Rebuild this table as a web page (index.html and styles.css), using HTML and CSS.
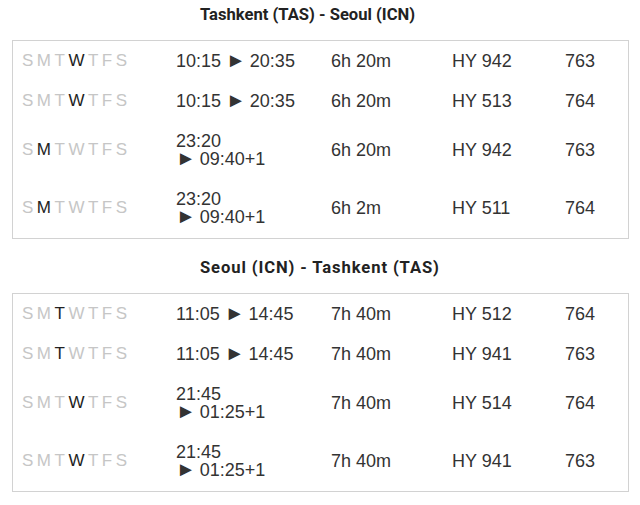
FILE: index.html
```html
<!DOCTYPE html>
<html lang="en">
<head>
<meta charset="utf-8">
<title>Tashkent - Seoul schedule</title>
<link rel="stylesheet" href="styles.css">
</head>
<body>
<main class="page">
  <section class="route">
    <h2 class="route-title">Tashkent (TAS) - Seoul (ICN)</h2>
    <div class="schedule">
      <div class="flight">
        <div class="days"><span>S</span><span>M</span><span>T</span><span class="on">W</span><span>T</span><span>F</span><span>S</span></div>
        <div class="time">10:15 <span class="arrow">►</span>&nbsp;20:35</div>
        <div class="dur">6h 20m</div>
        <div class="code">HY 942</div>
        <div class="craft">763</div>
      </div>
      <div class="flight">
        <div class="days"><span>S</span><span>M</span><span>T</span><span class="on">W</span><span>T</span><span>F</span><span>S</span></div>
        <div class="time">10:15 <span class="arrow">►</span>&nbsp;20:35</div>
        <div class="dur">6h 20m</div>
        <div class="code">HY 513</div>
        <div class="craft">764</div>
      </div>
      <div class="flight">
        <div class="days"><span>S</span><span class="on">M</span><span>T</span><span>W</span><span>T</span><span>F</span><span>S</span></div>
        <div class="time">23:20 <span class="arrow">►</span>&nbsp;09:40+1</div>
        <div class="dur">6h 20m</div>
        <div class="code">HY 942</div>
        <div class="craft">763</div>
      </div>
      <div class="flight">
        <div class="days"><span>S</span><span class="on">M</span><span>T</span><span>W</span><span>T</span><span>F</span><span>S</span></div>
        <div class="time">23:20 <span class="arrow">►</span>&nbsp;09:40+1</div>
        <div class="dur">6h 2m</div>
        <div class="code">HY 511</div>
        <div class="craft">764</div>
      </div>
    </div>
  </section>
  <section class="route">
    <h2 class="route-title route-title--wide">Seoul (ICN) - Tashkent (TAS)</h2>
    <div class="schedule">
      <div class="flight">
        <div class="days"><span>S</span><span>M</span><span class="on">T</span><span>W</span><span>T</span><span>F</span><span>S</span></div>
        <div class="time">11:05 <span class="arrow">►</span>&nbsp;14:45</div>
        <div class="dur">7h 40m</div>
        <div class="code">HY 512</div>
        <div class="craft">764</div>
      </div>
      <div class="flight">
        <div class="days"><span>S</span><span>M</span><span class="on">T</span><span>W</span><span>T</span><span>F</span><span>S</span></div>
        <div class="time">11:05 <span class="arrow">►</span>&nbsp;14:45</div>
        <div class="dur">7h 40m</div>
        <div class="code">HY 941</div>
        <div class="craft">763</div>
      </div>
      <div class="flight">
        <div class="days"><span>S</span><span>M</span><span>T</span><span class="on">W</span><span>T</span><span>F</span><span>S</span></div>
        <div class="time">21:45 <span class="arrow">►</span>&nbsp;01:25+1</div>
        <div class="dur">7h 40m</div>
        <div class="code">HY 514</div>
        <div class="craft">764</div>
      </div>
      <div class="flight">
        <div class="days"><span>S</span><span>M</span><span>T</span><span class="on">W</span><span>T</span><span>F</span><span>S</span></div>
        <div class="time">21:45 <span class="arrow">►</span>&nbsp;01:25+1</div>
        <div class="dur">7h 40m</div>
        <div class="code">HY 941</div>
        <div class="craft">763</div>
      </div>
    </div>
  </section>
</main>
</body>
</html>
```
FILE: styles.css
```css
html, body {
  margin: 0;
  padding: 0;
  background: #ffffff;
}

.page {
  padding: 0 11px 0 12px;
  display: flex;
  flex-direction: column;
  gap: 14px;
  font-family: "Liberation Sans", Arial, sans-serif;
  color: #333333;
}

.route-title {
  margin: 0 0 11px;
  padding-left: 188px;
  font-family: Roboto, "Liberation Sans", sans-serif;
  font-weight: 700;
  font-size: 16.6px;
  line-height: 29px;
  text-align: left;
  color: #222222;
}

.route-title--wide {
  letter-spacing: 0.9px;
}

.schedule {
  border: 1px solid #d2d2d2;
  padding-bottom: 1px;
}

.flight {
  display: grid;
  grid-template-columns: 154px 155px 121px 113px 1fr;
  align-items: center;
  padding: 11px 0 11px 9px;
  font-size: 18px;
  line-height: 18px;
}

.days {
  font-size: 17px;
  letter-spacing: 3.5px;
  color: #c6c6c6;
}

.days .on {
  color: #222222;
}

.time {
  max-width: 128px;
}

.arrow {
  font-size: 20px;
  line-height: 0;
  letter-spacing: -1px;
  color: #333333;
}
```
